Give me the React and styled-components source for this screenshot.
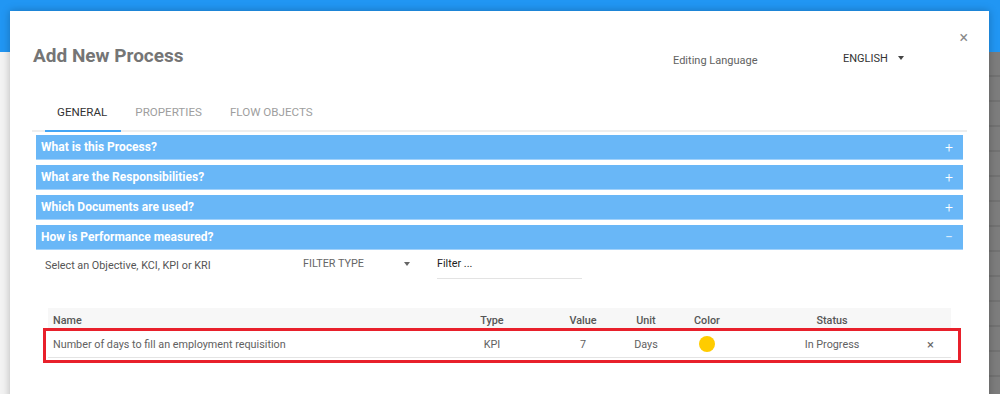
import React from 'react';
import styled, { createGlobalStyle } from 'styled-components';

const GlobalStyle = createGlobalStyle`
  html, body {
    margin: 0;
    padding: 0;
    font-family: Roboto, "Liberation Sans", Arial, sans-serif;
    background: #f4f4f4;
  }
`;

const Page = styled.div`
  position: relative;
  width: 1000px;
  height: 394px;
  overflow: hidden;
  display: flex;
  flex-direction: column;
`;

const TopBar = styled.div`
  height: 52px;
  background: #2196f3;
`;

const Backdrop = styled.div`
  flex: 1;
  display: flex;
`;

const BackdropLeft = styled.div`
  flex: 1;
  background: #f3f3f3;
`;

const BackdropRight = styled.div`
  width: 11px;
  background: repeating-linear-gradient(
    to bottom,
    #7d7d7d 0px,
    #7d7d7d 23px,
    #727272 23px,
    #727272 25px
  );
  border-left: 2px solid #6e6e6e;
`;

const Modal = styled.div`
  position: absolute;
  left: 10px;
  top: 11px;
  width: 979px;
  height: 400px;
  background: #fff;
  box-shadow: 0 0 8px rgba(0, 0, 0, 0.25);
`;

const CloseButton = styled.button`
  position: absolute;
  top: 19px;
  right: 21px;
  border: none;
  background: none;
  padding: 0;
  color: #8a8a8a;
  font-size: 16px;
  line-height: 16px;
  cursor: pointer;
  font-family: inherit;
`;

const Header = styled.div`
  display: flex;
  align-items: center;
  height: 24px;
  margin-top: 33px;
  padding-left: 23px;
`;

const Title = styled.h2`
  flex: 1;
  margin: 0;
  font-size: 19px;
  line-height: 24px;
  font-weight: 700;
  color: #757575;
`;

const LangLabel = styled.span`
  width: 170px;
  margin-top: 8px;
  font-size: 11px;
  color: #616161;
`;

const LangSelect = styled.div`
  width: 146px;
  margin-top: 4px;
  display: flex;
  align-items: center;
  font-size: 11px;
  color: #333;
`;

const Caret = styled.span`
  width: 0;
  height: 0;
  border-left: 3.5px solid transparent;
  border-right: 3.5px solid transparent;
  border-top: 4px solid ${(p) => p.color || '#444'};
  margin-left: ${(p) => p.offset}px;
`;

const TabBar = styled.div`
  display: flex;
  margin: 27px 22px 0;
  padding-left: 13px;
  border-bottom: 2px solid #eeeeee;
`;

const Tab = styled.div`
  padding: 0 14px 0 12px;
  height: 35px;
  line-height: 35px;
  font-size: 11.6px;
  color: ${(p) => (p.active ? '#333' : '#9e9e9e')};
  border-bottom: 2px solid ${(p) => (p.active ? '#42a5f5' : 'transparent')};
  margin-bottom: -2px;
  margin-right: 2px;
`;

const Section = styled.div`
  margin: 3px 26px 0;
`;

const Panel = styled.div`
  display: flex;
  align-items: center;
  justify-content: space-between;
  height: 24px;
  margin-bottom: 5px;
  padding: 0 10px 0 5px;
  background: #69b7f7;
  border-bottom: 1px solid #a3d2fa;
  color: #fff;
  font-size: 12px;
  font-weight: 700;
`;

const PanelSign = styled.span`
  font-weight: 300;
  font-size: 14px;
`;

const FilterRow = styled.div`
  display: flex;
  align-items: flex-end;
  height: 29px;
  margin-top: -5px;
  padding-left: 9px;
`;

const FilterLabel = styled.span`
  width: 258px;
  padding-bottom: 7px;
  font-size: 10.8px;
  color: #555;
`;

const FilterSelect = styled.div`
  width: 134px;
  display: flex;
  align-items: center;
  padding-bottom: 9px;
  font-size: 10.8px;
  color: #666;
`;

const FilterInput = styled.div`
  width: 145px;
  padding-bottom: 8px;
  border-bottom: 1px solid #e3e3e3;
  font-size: 10.8px;
  color: #222;
`;

const Table = styled.div`
  margin: 29px 12px 0;
  width: 903px;
`;

const Columns = styled.div`
  display: grid;
  grid-template-columns: 402px 84px 98px 28px 94px 156px 41px;
  align-items: center;
  font-size: 10.8px;
`;

const HeadRow = styled(Columns)`
  height: 22px;
  padding-top: 2px;
  box-sizing: border-box;
  background: #f7f7f7;
  color: #555;
  font-weight: 500;
`;

const Highlight = styled.div`
  margin: -2px -10px 0 -5px;
  padding: 0 7px 2px 2px;
  border: 3px solid #e8202b;
`;

const DataRow = styled(Columns)`
  height: 26px;
  border-bottom: 1px solid #e4e4e4;
  color: #616161;
`;

const Cell = styled.div`
  padding-left: ${(p) => (p.left ? '5px' : '0')};
  white-space: nowrap;
  display: flex;
  justify-content: ${(p) => (p.left ? 'flex-start' : 'center')};
`;

const Dot = styled.span`
  width: 16px;
  height: 16px;
  border-radius: 50%;
  background: ${(p) => p.color};
`;

const Remove = styled.span`
  color: #666;
  font-size: 13px;
`;

const panels = [
  { title: 'What is this Process?', open: false },
  { title: 'What are the Responsibilities?', open: false },
  { title: 'Which Documents are used?', open: false },
  { title: 'How is Performance measured?', open: true },
];

const measures = [
  { name: 'Number of days to fill an employment requisition', type: 'KPI', value: 7, unit: 'Days', color: '#ffcc00', status: 'In Progress' },
];

export default function App() {
  return (
    <Page>
      <GlobalStyle />
      <TopBar />
      <Backdrop>
        <BackdropLeft />
        <BackdropRight />
      </Backdrop>

      <Modal>
        <CloseButton>×</CloseButton>
        <Header>
          <Title>Add New Process</Title>
          <LangLabel>Editing Language</LangLabel>
          <LangSelect>
            ENGLISH
            <Caret offset={10} />
          </LangSelect>
        </Header>

        <TabBar>
          <Tab active>GENERAL</Tab>
          <Tab>PROPERTIES</Tab>
          <Tab>FLOW OBJECTS</Tab>
        </TabBar>

        <Section>
          {panels.map((p) => (
            <Panel key={p.title}>
              {p.title}
              <PanelSign>{p.open ? '−' : '+'}</PanelSign>
            </Panel>
          ))}

          <FilterRow>
            <FilterLabel>Select an Objective, KCI, KPI or KRI</FilterLabel>
            <FilterSelect>
              FILTER TYPE
              <Caret offset={40} color="#666" />
            </FilterSelect>
            <FilterInput>Filter ...</FilterInput>
          </FilterRow>

          <Table>
            <HeadRow>
              <Cell left>Name</Cell>
              <Cell>Type</Cell>
              <Cell>Value</Cell>
              <Cell>Unit</Cell>
              <Cell>Color</Cell>
              <Cell>Status</Cell>
              <Cell />
            </HeadRow>
            <Highlight>
              {measures.map((m) => (
                <DataRow key={m.name}>
                  <Cell left>{m.name}</Cell>
                  <Cell>{m.type}</Cell>
                  <Cell>{m.value}</Cell>
                  <Cell>{m.unit}</Cell>
                  <Cell><Dot color={m.color} /></Cell>
                  <Cell>{m.status}</Cell>
                  <Cell><Remove>×</Remove></Cell>
                </DataRow>
              ))}
            </Highlight>
          </Table>
        </Section>
      </Modal>
    </Page>
  );
}
